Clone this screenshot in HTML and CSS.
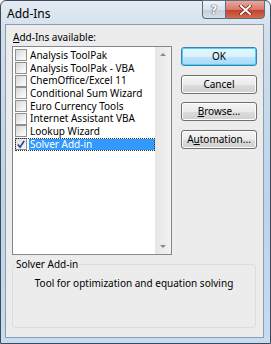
FILE: index.html
```html
<html>
<head>
    <title>Add-Ins</title>
    <link rel="stylesheet" href="styles.css">
</head>
<body>
    <div class="window">
        <div class="titlebar">
            <span class="title">Add-Ins</span>
            <div class="caption">
                <div class="capbtn help">?</div>
                <div class="capbtn close">
                    <svg width="13" height="10" viewBox="0 0 13 10">
                        <path d="M2 1 L11 9 M11 1 L2 9" stroke="#6a1a12" stroke-width="3.4" stroke-linecap="square"/>
                        <path d="M2 1 L11 9 M11 1 L2 9" stroke="#fff" stroke-width="2" stroke-linecap="square"/>
                    </svg>
                </div>
            </div>
        </div>
        <div class="panel">
            <div class="top">
                <div class="left">
                    <div class="label"><u>A</u>dd-Ins available:</div>
                    <div class="listbox">
                        <div class="items">
                            <div class="item"><span class="box"></span><span class="txt">Analysis ToolPak</span></div>
                            <div class="item"><span class="box"></span><span class="txt">Analysis ToolPak - VBA</span></div>
                            <div class="item"><span class="box"></span><span class="txt">ChemOffice/Excel 11</span></div>
                            <div class="item"><span class="box"></span><span class="txt">Conditional Sum Wizard</span></div>
                            <div class="item"><span class="box"></span><span class="txt">Euro Currency Tools</span></div>
                            <div class="item"><span class="box"></span><span class="txt">Internet Assistant VBA</span></div>
                            <div class="item"><span class="box"></span><span class="txt">Lookup Wizard</span></div>
                            <div class="item selected">
                                <span class="box checked">
                                    <svg width="11" height="11" viewBox="0 0 11 11"><path d="M2 5.5 L4.5 8.5 L9 1.5" fill="none" stroke="#2a3a8c" stroke-width="1.8"/></svg>
                                </span>
                                <span class="txt">Solver Add-in</span>
                            </div>
                        </div>
                        <div class="scroll">
                            <span class="arrow up"></span>
                            <span class="arrow down"></span>
                        </div>
                    </div>
                </div>
                <div class="buttons">
                    <div class="btn default">OK</div>
                    <div class="btn">Cancel</div>
                    <div class="btn"><u>B</u>rowse...</div>
                    <div class="btn">A<u>u</u>tomation...</div>
                </div>
            </div>
            <fieldset class="group">
                <legend>Solver Add-in</legend>
                <div class="desc">Tool for optimization and equation solving</div>
            </fieldset>
        </div>
    </div>
</body>
</html>
```

FILE: styles.css
```css
body {
    margin: 0;
    background-color: #fff;
    font-family: "Noto Sans", "Open Sans", sans-serif;
    font-size: 10px;
    color: #000;
}

.window {
    box-sizing: border-box;
    width: 271px;
    height: 344px;
    border: 1px solid #3d4a58;
    border-radius: 6px 6px 0 0;
    background: linear-gradient(180deg, #e3ebf3 0%, #cfdeec 10%, #bcd3ea 60%, #c6dcf0 100%);
    padding: 0 6px 5px 4px;
    display: flex;
    flex-direction: column;
}

.titlebar {
    height: 23px;
    display: flex;
    justify-content: space-between;
    align-items: flex-start;
}

.title {
    font-size: 12px;
    margin: 4px 0 0 2px;
}

.caption {
    display: flex;
    margin-top: -1px;
    margin-right: -1px;
}

.capbtn {
    height: 19px;
    border: 1px solid #5f6e7e;
    box-sizing: border-box;
    display: flex;
    align-items: center;
    justify-content: center;
}

.help {
    width: 23px;
    border-radius: 0 0 0 4px;
    border-right: none;
    background: linear-gradient(180deg, #eef3f8 0%, #d8e2ec 50%, #c3cfdb 51%, #d4dee8 100%);
    font-family: "DejaVu Sans", sans-serif;
    font-weight: bold;
    font-size: 12px;
    color: #fff;
    text-shadow: 0 0 1px #333, 0 0 1px #333;
}

.close {
    width: 40px;
    border-radius: 0 0 4px 0;
    background: linear-gradient(180deg, #e9a99c 0%, #d9786a 50%, #c2402d 51%, #d36a4e 100%);
}

.panel {
    flex: 1;
    background-color: #ececec;
    border: 1px solid #8e9cab;
    padding: 5px 6px 0 6px;
}

.top {
    display: flex;
}

.left {
    width: 160px;
}

.label {
    height: 15px;
    line-height: 15px;
    padding-left: 1px;
}

.listbox {
    margin-top: 1px;
    height: 209px;
    box-sizing: border-box;
    border: 1px solid #828790;
    background: #fff;
    display: flex;
}

.items {
    flex: 1;
    padding: 2px 0 0 2px;
}

.item {
    height: 12.7px;
    display: flex;
    align-items: center;
}

.box {
    box-sizing: border-box;
    width: 12px;
    height: 12px;
    border: 1px solid #8e8f8f;
    background: linear-gradient(135deg, #d6d6d6 0%, #f4f4f4 70%, #fff 100%);
    display: flex;
    align-items: center;
    justify-content: center;
    flex-shrink: 0;
}

.box.checked {
    background: linear-gradient(135deg, #e0e0e0 0%, #fafafa 100%);
}

.txt {
    margin-left: 2px;
    padding: 0 1px;
    line-height: 12.7px;
    white-space: nowrap;
}

.selected {
    outline: 1px dotted #333;
    outline-offset: -1px;
}

.selected .txt {
    flex: 1;
    background-color: #3399ff;
    color: #fff;
    height: 11px;
    line-height: 11px;
}

.scroll {
    width: 16px;
    background: linear-gradient(90deg, #e6e6e6, #f2f2f2);
    display: flex;
    flex-direction: column;
    justify-content: space-between;
    align-items: center;
    padding: 6px 0;
}

.arrow {
    width: 0;
    height: 0;
    border-left: 3px solid transparent;
    border-right: 3px solid transparent;
}

.arrow.up {
    border-bottom: 3px solid #8a8a8a;
}

.arrow.down {
    border-top: 3px solid #8a8a8a;
}

.buttons {
    margin: 17px 0 0 9px;
    display: flex;
    flex-direction: column;
    gap: 8.5px;
}

.btn {
    box-sizing: border-box;
    width: 76px;
    height: 19px;
    border: 1px solid #707070;
    border-radius: 3px;
    background: linear-gradient(180deg, #f4f4f4 0%, #ebebeb 50%, #dddddd 51%, #cfcfcf 100%);
    box-shadow: inset 0 0 0 1px #fcfcfc;
    text-align: center;
    line-height: 17px;
}

.btn.default {
    border-color: #3c7fb1;
    background: linear-gradient(180deg, #eaf6fd 0%, #d9f0fc 50%, #bee6fd 51%, #a7d9f5 100%);
    box-shadow: inset 0 0 0 1px #48d2fc;
}

.group {
    margin: 3px 1px 0 0;
    padding: 0;
    height: 70px;
    box-sizing: border-box;
    border: 1px solid #d5dfe5;
    border-radius: 3px;
}

.group legend {
    padding: 0 1px;
    margin-left: 2px;
    line-height: 12px;
}

.desc {
    text-align: center;
    margin-top: 6px;
    line-height: 15px;
}
```
